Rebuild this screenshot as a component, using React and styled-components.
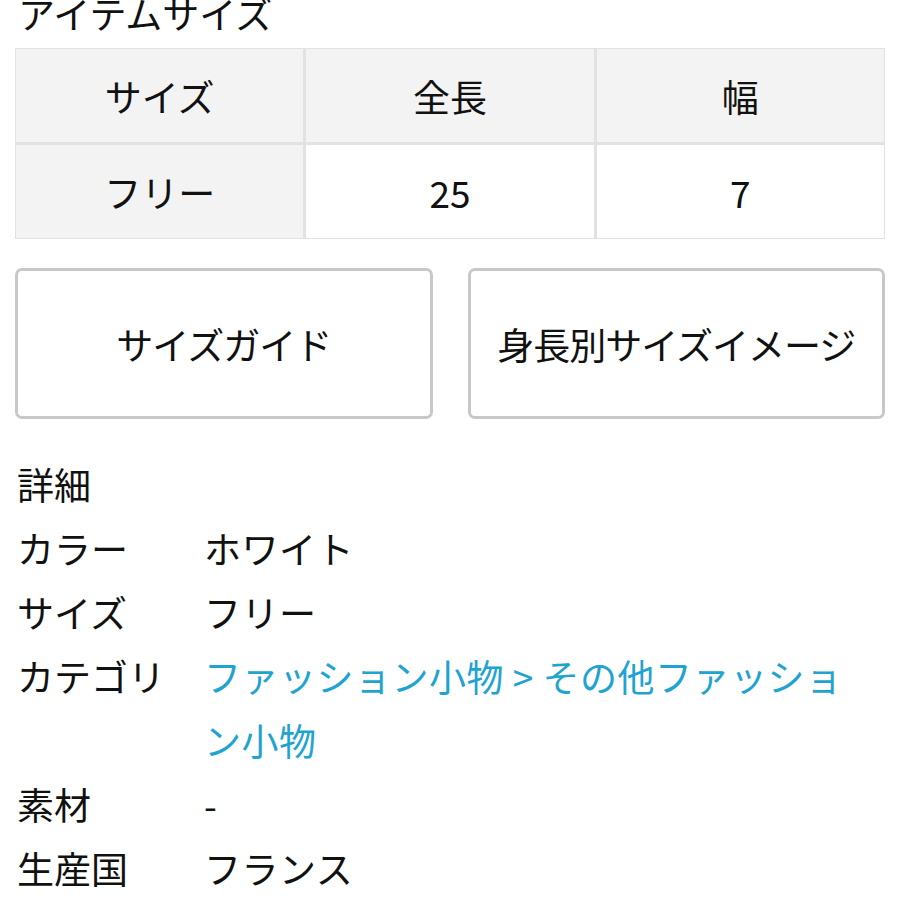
import React from "react";
import styled, { createGlobalStyle } from "styled-components";

const Global = createGlobalStyle`
  html, body { margin: 0; padding: 0; background: #fff; }
  body {
    font-family: "Noto Sans CJK JP", "Noto Sans", sans-serif;
    color: #111;
  }
`;

const Page = styled.div`
  width: 900px;
  height: 900px;
  overflow: hidden;
  padding: 0 15px;
  box-sizing: border-box;
`;

const Title = styled.div`
  font-size: 37px;
  line-height: 44px;
  margin-top: -9px;
  padding-left: 3px;
  height: 57px;
`;

const Table = styled.div`
  display: grid;
  grid-template-columns: repeat(3, 1fr);
  border: 1.5px solid #e2e2e2;
  background: #e2e2e2;
  gap: 3px;
`;

const Cell = styled.div`
  height: 93px;
  display: flex;
  align-items: center;
  justify-content: center;
  font-size: 37px;
  background: ${(p) => (p.$shade ? "#f3f3f3" : "#fff")};
`;

const Buttons = styled.div`
  display: grid;
  grid-template-columns: 1fr 1fr;
  gap: 35px;
  margin-top: 29px;
`;

const Button = styled.div`
  height: 151px;
  box-sizing: border-box;
  border: 3px solid #c8c8c8;
  border-radius: 7px;
  display: flex;
  align-items: center;
  justify-content: center;
  font-size: 37px;
  letter-spacing: -1px;
`;

const Section = styled.div`
  margin-top: 33px;
  font-size: 37px;
  line-height: 64px;
  padding-left: 2px;
`;

const Row = styled.div`
  display: grid;
  grid-template-columns: 189px 1fr;
  font-size: 37px;
  line-height: 64px;
`;

const Label = styled.div`
  padding-left: 2px;
`;

const Value = styled.div`
  color: ${(p) => (p.$link ? "#1fa3d1" : "#111")};
  max-width: 660px;
  letter-spacing: 0.5px;
`;

const sizeRows = [
  ["サイズ", "全長", "幅"],
  ["フリー", "25", "7"],
];

const details = [
  ["カラー", "ホワイト"],
  ["サイズ", "フリー"],
  ["カテゴリ", "ファッション小物 > その他ファッション小物", true],
  ["素材", "-"],
  ["生産国", "フランス"],
];

export default function App() {
  return (
    <Page>
      <Global />
      <Title>アイテムサイズ</Title>
      <Table>
        {sizeRows.map((r, i) =>
          r.map((c, j) => (
            <Cell key={`${i}-${j}`} $shade={i === 0 || j === 0}>
              {c}
            </Cell>
          ))
        )}
      </Table>
      <Buttons>
        <Button>サイズガイド</Button>
        <Button>身長別サイズイメージ</Button>
      </Buttons>
      <Section>詳細</Section>
      {details.map(([l, v, link]) => (
        <Row key={l}>
          <Label>{l}</Label>
          <Value $link={link}>{v}</Value>
        </Row>
      ))}
    </Page>
  );
}
